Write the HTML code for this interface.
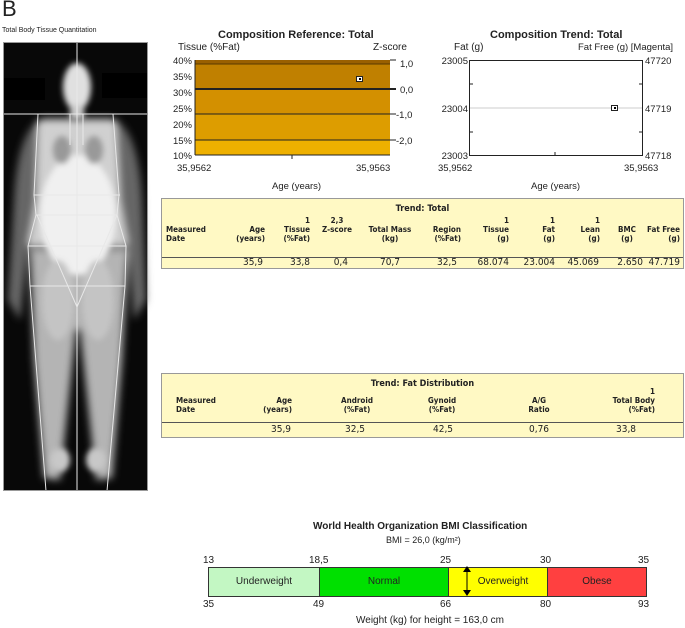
<!DOCTYPE html>
<html><head><meta charset="utf-8"><style>
body{margin:0;width:685px;height:628px;background:#fff;font-family:"Liberation Sans",sans-serif;position:relative;overflow:hidden;color:#222}
.a{position:absolute;white-space:nowrap}
.t{font-size:10px}
.tb{position:absolute;background:#fff9c4;border:1px solid #999;font-size:8px;font-family:"DejaVu Sans Condensed","Liberation Sans",sans-serif}
.tb .h{font-weight:bold;}
.d{font-family:"DejaVu Sans Condensed","Liberation Sans",sans-serif;font-size:10px}
</style></head><body>
<div class="a" style="left:2px;top:-4px;font-size:22px">B</div>
<div class="a" style="left:2px;top:27px;font-size:7px">Total Body Tissue Quantitation</div>

<svg class="a" style="left:0;top:0" width="160" height="500">
<defs><filter id="b" x="-50%" y="-50%" width="200%" height="200%"><feGaussianBlur stdDeviation="4"/></filter>
<filter id="b2" x="-50%" y="-50%" width="200%" height="200%"><feGaussianBlur stdDeviation="3"/></filter></defs>
<rect x="3" y="42" width="145" height="449" fill="#080808"/>
<rect x="3" y="78" width="42" height="22" fill="#000"/>
<rect x="102" y="73" width="46" height="25" fill="#000"/>
<g filter="url(#b)">
<path d="M14 200 Q18 125 45 118 L110 118 Q138 125 142 200 L146 300 L134 320 L128 250 L28 250 L20 320 L8 300 Z" fill="#666"/>
<path d="M30 250 L128 250 L122 360 L112 478 L96 480 L80 330 L76 330 L60 480 L44 478 L34 360 Z" fill="#b4b4b4"/>
<path d="M38 120 L116 120 L120 200 L128 245 L28 245 L36 200 Z" fill="#d0d0d0"/>
</g>
<g filter="url(#b2)">
<ellipse cx="77" cy="87" rx="14" ry="24" fill="#e0e0e0"/>
<rect x="70" y="105" width="14" height="14" fill="#ccc"/>
<ellipse cx="78" cy="215" rx="38" ry="60" fill="#f0f0f0"/>
<ellipse cx="62" cy="150" rx="9" ry="14" fill="#999"/>
<ellipse cx="94" cy="150" rx="9" ry="14" fill="#999"/>
<ellipse cx="58" cy="300" rx="16" ry="40" fill="#c4c4c4"/>
<ellipse cx="98" cy="300" rx="16" ry="40" fill="#c4c4c4"/>
<ellipse cx="60" cy="460" rx="10" ry="12" fill="#c8c8c8"/>
<ellipse cx="96" cy="460" rx="10" ry="12" fill="#c8c8c8"/>
</g>
<g stroke="#e8e8e8" stroke-width="1" fill="none">
<line x1="3" y1="114" x2="148" y2="114"/>
<line x1="77" y1="42" x2="77" y2="491"/>
<line x1="70" y1="114" x2="70" y2="145"/><line x1="83" y1="114" x2="83" y2="145"/>
<path d="M38 114 L34 195 L36 215 L28 246 L30 286 L46 491"/>
<path d="M113 114 L119 195 L117 215 L126 246 L125 286 L107 491"/>
<line x1="34" y1="195" x2="120" y2="195"/>
<line x1="36" y1="215" x2="117" y2="215"/>
<line x1="28" y1="246" x2="126" y2="246"/>
<line x1="30" y1="286" x2="125" y2="286"/>
<path d="M37 215 L77 307 L117 215"/>
</g>
<rect x="3.5" y="42.5" width="144" height="448" fill="none" stroke="#999"/>
</svg>

<!-- Chart 1 -->
<div class="a" style="left:218px;top:29px;font-size:11px;font-weight:bold">Composition Reference: Total</div>
<div class="a t" style="left:178px;top:42px">Tissue (%Fat)</div>
<div class="a t" style="left:373px;top:42px">Z-score</div>
<svg class="a" style="left:160px;top:50px" width="260" height="145">
<rect x="35" y="10" width="195" height="4" fill="#9a6000"/>
<rect x="35" y="14" width="195" height="25" fill="#c08000"/>
<rect x="35" y="39" width="195" height="25" fill="#d39000"/>
<rect x="35" y="64" width="195" height="26" fill="#dd9d00"/>
<rect x="35" y="90" width="195" height="15" fill="#eeb000"/>
<g stroke="#222"><line x1="35" y1="14" x2="230" y2="14" stroke="#5a3a00"/>
<line x1="35" y1="39" x2="236" y2="39" stroke-width="2"/>
<line x1="35" y1="64" x2="236" y2="64"/><line x1="35" y1="90" x2="236" y2="90"/>
<line x1="35" y1="10" x2="35" y2="105"/><line x1="35" y1="105" x2="230" y2="105"/>
<line x1="230" y1="10" x2="236" y2="10"/><line x1="132" y1="105" x2="132" y2="109"/></g>
<rect x="196.5" y="26.5" width="6" height="5" fill="#fff" stroke="#222"/><rect x="199" y="28" width="2" height="2" fill="#000"/>
<g font-size="9.5" fill="#222" font-family="Liberation Sans">
<text x="32" y="14" text-anchor="end">40%</text><text x="32" y="30" text-anchor="end">35%</text>
<text x="32" y="46" text-anchor="end">30%</text><text x="32" y="62" text-anchor="end">25%</text>
<text x="32" y="78" text-anchor="end">20%</text><text x="32" y="94" text-anchor="end">15%</text>
<text x="32" y="109" text-anchor="end">10%</text>
<text x="240" y="17">1,0</text><text x="240" y="43">0,0</text><text x="236" y="68">-1,0</text><text x="236" y="94">-2,0</text>
<text x="17" y="121">35,9562</text><text x="196" y="121">35,9563</text>
<text x="112" y="139">Age (years)</text></g>
</svg>

<!-- Chart 2 -->
<div class="a" style="left:490px;top:29px;font-size:11px;font-weight:bold">Composition Trend: Total</div>
<div class="a t" style="left:454px;top:42px">Fat (g)</div>
<div class="a t" style="left:578px;top:42px;font-size:9.5px">Fat Free (g) [Magenta]</div>
<svg class="a" style="left:420px;top:50px" width="265" height="145">
<line x1="49" y1="58" x2="222" y2="58" stroke="#ccc"/>
<g stroke="#222"><rect x="49.5" y="10.5" width="173" height="95" fill="none"/>
<line x1="49" y1="34" x2="53" y2="34"/><line x1="49" y1="82" x2="53" y2="82"/>
<line x1="219" y1="34" x2="223" y2="34"/><line x1="219" y1="82" x2="223" y2="82"/>
<line x1="135" y1="102" x2="135" y2="106"/></g>
<rect x="191.5" y="55.5" width="6" height="5" fill="#fff" stroke="#222"/><rect x="194" y="57" width="2" height="2" fill="#000"/>
<g font-size="9.5" fill="#222" font-family="Liberation Sans">
<text x="48" y="14" text-anchor="end">23005</text><text x="48" y="62" text-anchor="end">23004</text><text x="48" y="109" text-anchor="end">23003</text>
<text x="225" y="14">47720</text><text x="225" y="62">47719</text><text x="225" y="109">47718</text>
<text x="18" y="121">35,9562</text><text x="204" y="121">35,9563</text>
<text x="111" y="139">Age (years)</text></g>
</svg>

<!-- Trend Total -->
<div class="tb" style="left:161px;top:198px;width:521px;height:69px">
<div class="a h" style="left:0;width:521px;text-align:center;top:5px;font-size:9px">Trend: Total</div>
<div class="a h" style="left:4px;top:26px">Measured<br>Date</div>
<div class="a h" style="left:58px;width:45px;text-align:right;top:26px">Age<br>(years)</div>
<div class="a h" style="left:108px;width:40px;text-align:right;top:17px">1<br>Tissue<br>(%Fat)</div>
<div class="a h" style="left:150px;width:50px;text-align:center;top:17px">2,3<br>Z-score</div>
<div class="a h" style="left:203px;width:50px;text-align:center;top:26px">Total Mass<br>(kg)</div>
<div class="a h" style="left:255px;width:44px;text-align:right;top:26px">Region<br>(%Fat)</div>
<div class="a h" style="left:305px;width:42px;text-align:right;top:17px">1<br>Tissue<br>(g)</div>
<div class="a h" style="left:355px;width:38px;text-align:right;top:17px">1<br>Fat<br>(g)</div>
<div class="a h" style="left:398px;width:40px;text-align:right;top:17px">1<br>Lean<br>(g)</div>
<div class="a h" style="left:445px;width:40px;text-align:center;top:26px">BMC<br>(g)</div>
<div class="a h" style="left:478px;width:40px;text-align:right;top:26px">Fat Free<br>(g)</div>
<div class="a" style="left:0;top:58px;width:521px;border-top:1px solid #555"></div>
<div class="a d" style="top:58px;left:0;width:521px">
<span class="a" style="right:420px">35,9</span><span class="a" style="right:373px">33,8</span><span class="a" style="right:335px">0,4</span><span class="a" style="right:283px">70,7</span><span class="a" style="right:226px">32,5</span><span class="a" style="right:174px">68.074</span><span class="a" style="right:128px">23.004</span><span class="a" style="right:84px">45.069</span><span class="a" style="right:40px">2.650</span><span class="a" style="right:3px">47.719</span></div>
</div>

<!-- Fat distribution -->
<div class="tb" style="left:161px;top:373px;width:521px;height:63px">
<div class="a h" style="left:0;width:521px;text-align:center;top:5px;font-size:9px">Trend: Fat Distribution</div>
<div class="a h" style="left:14px;top:22px">Measured<br>Date</div>
<div class="a h" style="left:70px;width:60px;text-align:right;top:22px">Age<br>(years)</div>
<div class="a h" style="left:165px;width:60px;text-align:center;top:22px">Android<br>(%Fat)</div>
<div class="a h" style="left:250px;width:60px;text-align:center;top:22px">Gynoid<br>(%Fat)</div>
<div class="a h" style="left:347px;width:60px;text-align:center;top:22px">A/G<br>Ratio</div>
<div class="a h" style="left:425px;width:68px;text-align:right;top:13px">1<br>Total Body<br>(%Fat)</div>
<div class="a" style="left:0;top:48px;width:521px;border-top:1px solid #555"></div>
<div class="a d" style="top:50px;left:0;width:521px">
<span class="a" style="left:109px">35,9</span><span class="a" style="left:183px">32,5</span><span class="a" style="left:271px">42,5</span><span class="a" style="left:367px">0,76</span><span class="a" style="left:454px">33,8</span></div>
</div>

<!-- BMI -->
<div class="a" style="left:313px;top:521px;font-size:10px;font-weight:bold">World Health Organization BMI Classification</div>
<div class="a t" style="left:386px;top:535px;font-size:9px">BMI = 26,0 (kg/m²)</div>
<div class="a t" style="left:203px;top:555px">13</div>
<div class="a t" style="left:309px;top:555px">18,5</div>
<div class="a t" style="left:440px;top:555px">25</div>
<div class="a t" style="left:540px;top:555px">30</div>
<div class="a t" style="left:638px;top:555px">35</div>
<div class="a" style="left:208px;top:567px;width:437px;height:28px;border:1px solid #333;display:flex;font-size:10px">
<div style="width:110px;background:#c3f7c3;border-right:1px solid #333;text-align:center;line-height:28px">Underweight</div>
<div style="width:128px;background:#00e000;border-right:1px solid #333;text-align:center;line-height:28px">Normal</div>
<div style="width:99px;background:#ffff00;border-right:1px solid #333;text-align:center;line-height:28px;padding-left:10px;box-sizing:border-box">Overweight</div>
<div style="flex:1;background:#ff4040;text-align:center;line-height:28px">Obese</div>
</div>
<svg class="a" style="left:462px;top:565px" width="10" height="32"><line x1="5" y1="3" x2="5" y2="29" stroke="#000"/><path d="M1 7 L5 1 L9 7 Z M1 25 L5 31 L9 25 Z" fill="#000"/></svg>
<div class="a t" style="left:203px;top:599px">35</div>
<div class="a t" style="left:313px;top:599px">49</div>
<div class="a t" style="left:440px;top:599px">66</div>
<div class="a t" style="left:540px;top:599px">80</div>
<div class="a t" style="left:638px;top:599px">93</div>
<div class="a t" style="left:356px;top:615px">Weight (kg) for height = 163,0 cm</div>
</body></html>
